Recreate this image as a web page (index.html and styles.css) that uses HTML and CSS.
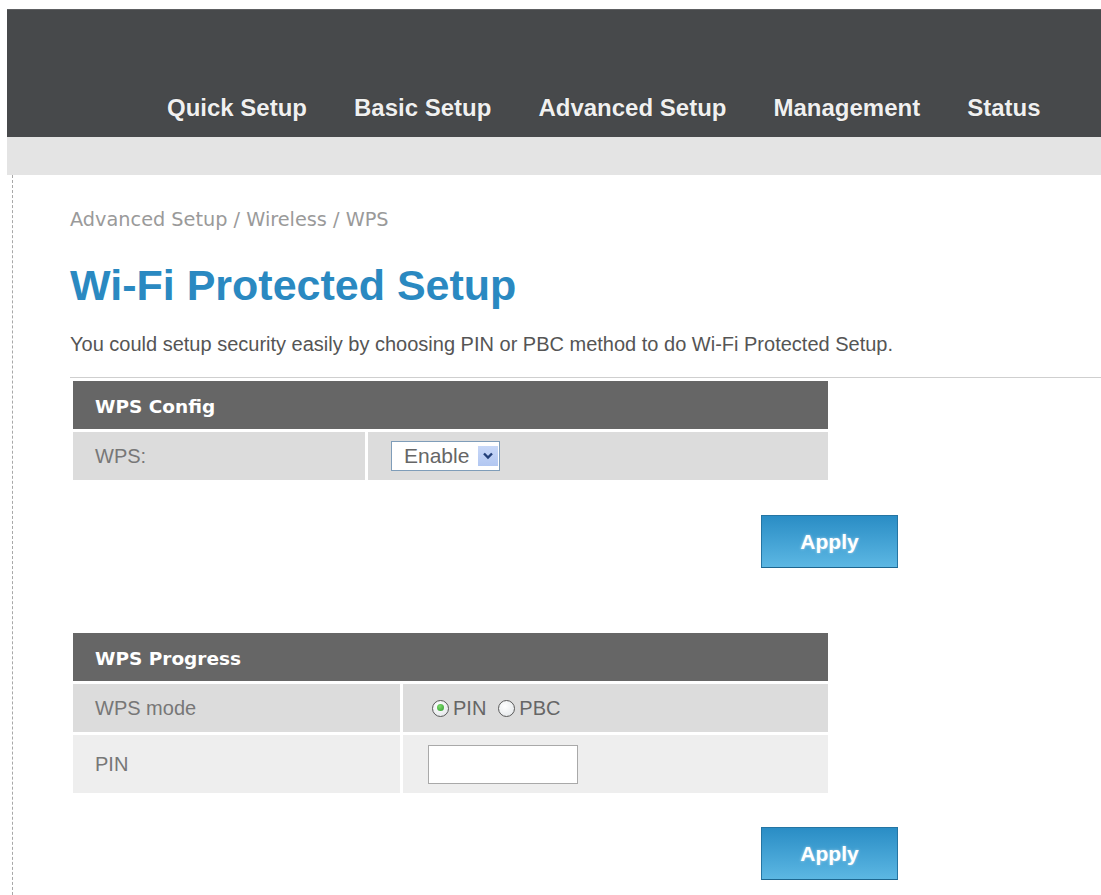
FILE: index.html
```html
<!DOCTYPE html>
<html lang="en">
<head>
<meta charset="utf-8">
<title>Wi-Fi Protected Setup</title>
<link rel="stylesheet" href="styles.css">
</head>
<body>
<div class="page">
  <header class="topbar">
    <nav class="mainnav">
      <a href="#">Quick Setup</a>
      <a href="#">Basic Setup</a>
      <a href="#">Advanced Setup</a>
      <a href="#">Management</a>
      <a href="#">Status</a>
    </nav>
  </header>
  <div class="subbar"></div>

  <main class="content">
    <div class="crumbs">Advanced Setup / Wireless / WPS</div>
    <h1 class="title">Wi-Fi Protected Setup</h1>
    <p class="intro">You could setup security easily by choosing PIN or PBC method to do Wi-Fi Protected Setup.</p>
    <div class="rule"></div>

    <table class="form-table config">
      <tr><th colspan="2">WPS Config</th></tr>
      <tr class="row-a">
        <td class="label">WPS:</td>
        <td class="value">
          <span class="select">
            <span class="select-text">Enable</span>
            <span class="select-arrow">
              <svg width="10" height="8" viewBox="0 0 10 8"><path d="M1 1.5 L5 5.5 L9 1.5" fill="none" stroke="#223f78" stroke-width="2.4"/></svg>
            </span>
          </span>
        </td>
      </tr>
    </table>
    <div class="actions"><button class="apply" type="button">Apply</button></div>

    <table class="form-table progress">
      <tr><th colspan="2">WPS Progress</th></tr>
      <tr class="row-a">
        <td class="label">WPS mode</td>
        <td class="value">
          <div class="radios">
            <label class="radio"><span class="dot checked"></span>PIN</label>
            <label class="radio"><span class="dot"></span>PBC</label>
          </div>
        </td>
      </tr>
      <tr class="row-b">
        <td class="label">PIN</td>
        <td class="value"><input class="pin" type="text"></td>
      </tr>
    </table>
    <div class="actions second"><button class="apply" type="button">Apply</button></div>
  </main>
</div>
</body>
</html>
```

FILE: styles.css
```css
html, body {
  margin: 0;
  padding: 0;
  background: #fff;
}

.page {
  padding: 9px 0 0 7px;
  min-height: 886px;
  font-family: "Liberation Sans", Arial, sans-serif;
}

/* dark top navigation band */
.topbar {
  height: 128px;
  background: #47494b;
  box-sizing: border-box;
  border-top: 1px solid #5e6062;
}

.mainnav {
  display: flex;
  gap: 47px;
  padding: 84px 0 0 160px;
}

.mainnav a {
  color: #f0f0f0;
  text-decoration: none;
  font-weight: bold;
  font-size: 24px;
  line-height: 28px;
  white-space: nowrap;
  text-shadow: 0 0 1px rgba(0, 0, 0, 0.4);
}

.subbar {
  height: 38px;
  background: #e4e4e4;
}

/* page body with dotted guide on the left */
.content {
  margin-left: 5px;
  border-left: 1px dashed #a8a8a8;
  padding: 34px 0 16px 57px;
  min-height: 680px;
}

.crumbs {
  font-family: "DejaVu Sans", Verdana, sans-serif;
  font-size: 19.3px;
  line-height: 22px;
  color: #9a9a9a;
}

.title {
  margin: 30px 0 0;
  font-size: 43px;
  line-height: 48px;
  font-weight: bold;
  color: #2a89c1;
}

.intro {
  margin: 23px 0 0;
  font-size: 20px;
  line-height: 24px;
  color: #555;
}

.rule {
  margin-top: 21px;
  height: 1px;
  background: #cfcfcf;
}

/* settings tables */
.form-table {
  border-collapse: separate;
  border-spacing: 3px;
  width: 761px;
}

.form-table th {
  background: #666;
  color: #fff;
  text-align: left;
  font-family: "DejaVu Sans", Verdana, sans-serif;
  font-size: 18.5px;
  font-weight: bold;
  height: 48px;
  padding: 3px 0 0 22px;
  box-sizing: border-box;
}

.form-table td {
  padding: 0;
  font-size: 20px;
  color: #777;
}

.form-table .label {
  padding-left: 22px;
}

.row-a td {
  background: #dcdcdc;
  height: 48px;
}

.row-b td {
  background: #eeeeee;
  height: 58px;
}

.config .label { width: 270px; }
.config .value { padding-left: 23px; }

.progress { margin-top: 62px; }
.progress .label { width: 305px; }
.progress .value { padding-left: 25px; }

/* drop-down box */
.select {
  display: inline-flex;
  align-items: center;
  width: 109px;
  height: 30px;
  box-sizing: border-box;
  border: 1px solid #7f9db9;
  background: #fff;
  position: relative;
  vertical-align: middle;
}

.select-text {
  padding-left: 12px;
  font-size: 21px;
  color: #666;
}

.select-arrow {
  position: absolute;
  right: 1px;
  top: 4px;
  width: 20px;
  height: 20px;
  display: flex;
  align-items: center;
  justify-content: center;
  background: linear-gradient(#c8d8f8, #b2c7f1);
}

/* radio buttons */
.radios {
  display: flex;
  align-items: center;
  padding-left: 4px;
}

.radio {
  display: inline-flex;
  align-items: center;
  color: #666;
  font-size: 20px;
  margin-right: 12px;
}

.dot {
  width: 17px;
  height: 17px;
  box-sizing: border-box;
  border: 1.5px solid #5a5a5a;
  border-radius: 50%;
  background: radial-gradient(circle at 40% 35%, #ffffff, #dfe3e6);
  margin-right: 4px;
  position: relative;
}

.dot.checked::after {
  content: "";
  position: absolute;
  left: 3.5px;
  top: 3.5px;
  width: 7px;
  height: 7px;
  border-radius: 50%;
  background: radial-gradient(circle at 40% 35%, #7ddc6c, #2f9a2f);
}

.pin {
  width: 150px;
  height: 39px;
  box-sizing: border-box;
  border: 1px solid #a9a9a9;
  background: #fff;
  margin: 0;
  padding: 0 4px;
  vertical-align: middle;
}

/* apply buttons */
.actions {
  width: 828px;
  display: flex;
  justify-content: flex-end;
  margin-top: 32px;
}

.actions.second {
  margin-top: 31px;
}

.apply {
  width: 137px;
  height: 53px;
  border: 1px solid #2575a3;
  border-bottom-color: #1d6690;
  background: linear-gradient(#2a8dc5, #5cb7e3);
  color: #fff;
  font-family: "Liberation Sans", Arial, sans-serif;
  font-weight: bold;
  font-size: 21px;
  text-shadow: 0 0 3px rgba(255, 255, 255, 0.5);
  padding: 0;
  cursor: pointer;
}
```
